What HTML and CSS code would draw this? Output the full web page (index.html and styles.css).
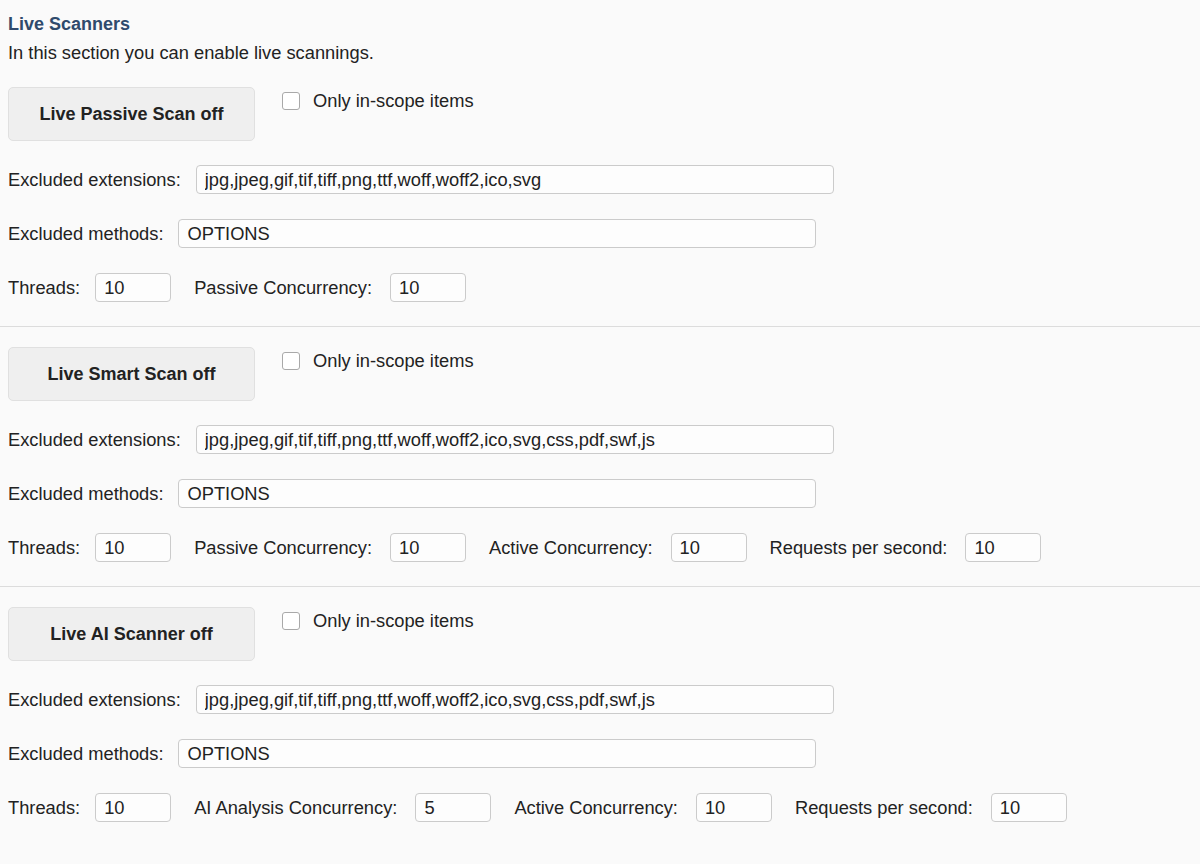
FILE: index.html
```html
<!DOCTYPE html>
<html lang="en">
<head>
    <meta charset="UTF-8">
    <title>Live Scanners</title>
    <link rel="stylesheet" href="styles.css">
</head>
<body>
    <div class="intro">
        <h2 class="title">Live Scanners</h2>
        <p class="desc">In this section you can enable live scannings.</p>
    </div>

    <div class="section">
        <div class="toggle-row">
            <button class="toggle">Live Passive Scan off</button>
            <label class="check"><input type="checkbox"><span>Only in-scope items</span></label>
        </div>
        <div class="field-row">
            <label>Excluded extensions:</label>
            <input class="wide" type="text" value="jpg,jpeg,gif,tif,tiff,png,ttf,woff,woff2,ico,svg">
        </div>
        <div class="field-row">
            <label>Excluded methods:</label>
            <input class="wide" type="text" value="OPTIONS">
        </div>
        <div class="field-row">
            <label>Threads:</label>
            <input class="small" type="text" value="10">
            <label>Passive Concurrency:</label>
            <input class="small" type="text" value="10">
        </div>
    </div>

    <div class="section">
        <div class="toggle-row">
            <button class="toggle">Live Smart Scan off</button>
            <label class="check"><input type="checkbox"><span>Only in-scope items</span></label>
        </div>
        <div class="field-row">
            <label>Excluded extensions:</label>
            <input class="wide" type="text" value="jpg,jpeg,gif,tif,tiff,png,ttf,woff,woff2,ico,svg,css,pdf,swf,js">
        </div>
        <div class="field-row">
            <label>Excluded methods:</label>
            <input class="wide" type="text" value="OPTIONS">
        </div>
        <div class="field-row">
            <label>Threads:</label>
            <input class="small" type="text" value="10">
            <label>Passive Concurrency:</label>
            <input class="small" type="text" value="10">
            <label>Active Concurrency:</label>
            <input class="small" type="text" value="10">
            <label>Requests per second:</label>
            <input class="small" type="text" value="10">
        </div>
    </div>

    <div class="section">
        <div class="toggle-row">
            <button class="toggle">Live AI Scanner off</button>
            <label class="check"><input type="checkbox"><span>Only in-scope items</span></label>
        </div>
        <div class="field-row">
            <label>Excluded extensions:</label>
            <input class="wide" type="text" value="jpg,jpeg,gif,tif,tiff,png,ttf,woff,woff2,ico,svg,css,pdf,swf,js">
        </div>
        <div class="field-row">
            <label>Excluded methods:</label>
            <input class="wide" type="text" value="OPTIONS">
        </div>
        <div class="field-row">
            <label>Threads:</label>
            <input class="small" type="text" value="10">
            <label>AI Analysis Concurrency:</label>
            <input class="small" type="text" value="5">
            <label>Active Concurrency:</label>
            <input class="small" type="text" value="10">
            <label>Requests per second:</label>
            <input class="small" type="text" value="10">
        </div>
    </div>
</body>
</html>
```

FILE: styles.css
```css
:root {
    --page: #fafafa;
    --text: #222222;
    --heading: #2f4a6c;
    --line: #dcdcdc;
    --field-border: #cbcbcb;
}

body {
    margin: 0;
    padding: 12px 0 0;
    background: var(--page);
    color: var(--text);
    font-family: 'Liberation Sans', Arial, sans-serif;
    font-size: 18.3px;
}

.intro {
    padding: 0 8px;
}
.title {
    margin: 0;
    font-size: 18px;
    font-weight: bold;
    line-height: 24px;
    color: var(--heading);
}
.desc {
    margin: 5px 0 2px;
    line-height: 24px;
}

/* one block per scanner, split by a thin rule */
.section {
    padding: 20px 8px 24px;
    border-bottom: 1px solid var(--line);
}
.section:last-child {
    border-bottom: none;
}

.toggle-row {
    display: flex;
    align-items: flex-start;
    gap: 27px;
    margin-bottom: 24px;
}
.toggle {
    width: 247px;
    height: 54px;
    background: #efefef;
    border: 1px solid #e0e0e0;
    border-radius: 5px;
    font-family: inherit;
    font-size: 18px;
    font-weight: bold;
    color: var(--text);
}
.check {
    display: flex;
    align-items: center;
    gap: 13px;
    margin-top: 5px;
    height: 18px;
}
.check input {
    appearance: none;
    margin: 0;
    width: 18px;
    height: 18px;
    background: #fff;
    border: 1px solid #a9a9a9;
    border-radius: 3px;
}

.field-row {
    display: flex;
    align-items: center;
    margin-bottom: 25px;
}
.field-row:last-child {
    margin-bottom: 0;
}
.field-row label {
    margin-right: 18px;
    white-space: nowrap;
}
.field-row label:first-child {
    margin-right: 15px;
}
.field-row input {
    box-sizing: border-box;
    height: 29px;
    margin: 0 23px 0 0;
    padding: 0 8px;
    background: #fdfdfd;
    border: 1px solid var(--field-border);
    border-radius: 4px;
    font-family: inherit;
    font-size: 18.3px;
    color: var(--text);
}
.field-row input.wide {
    width: 638px;
}
.field-row input.small {
    width: 76px;
}
```
